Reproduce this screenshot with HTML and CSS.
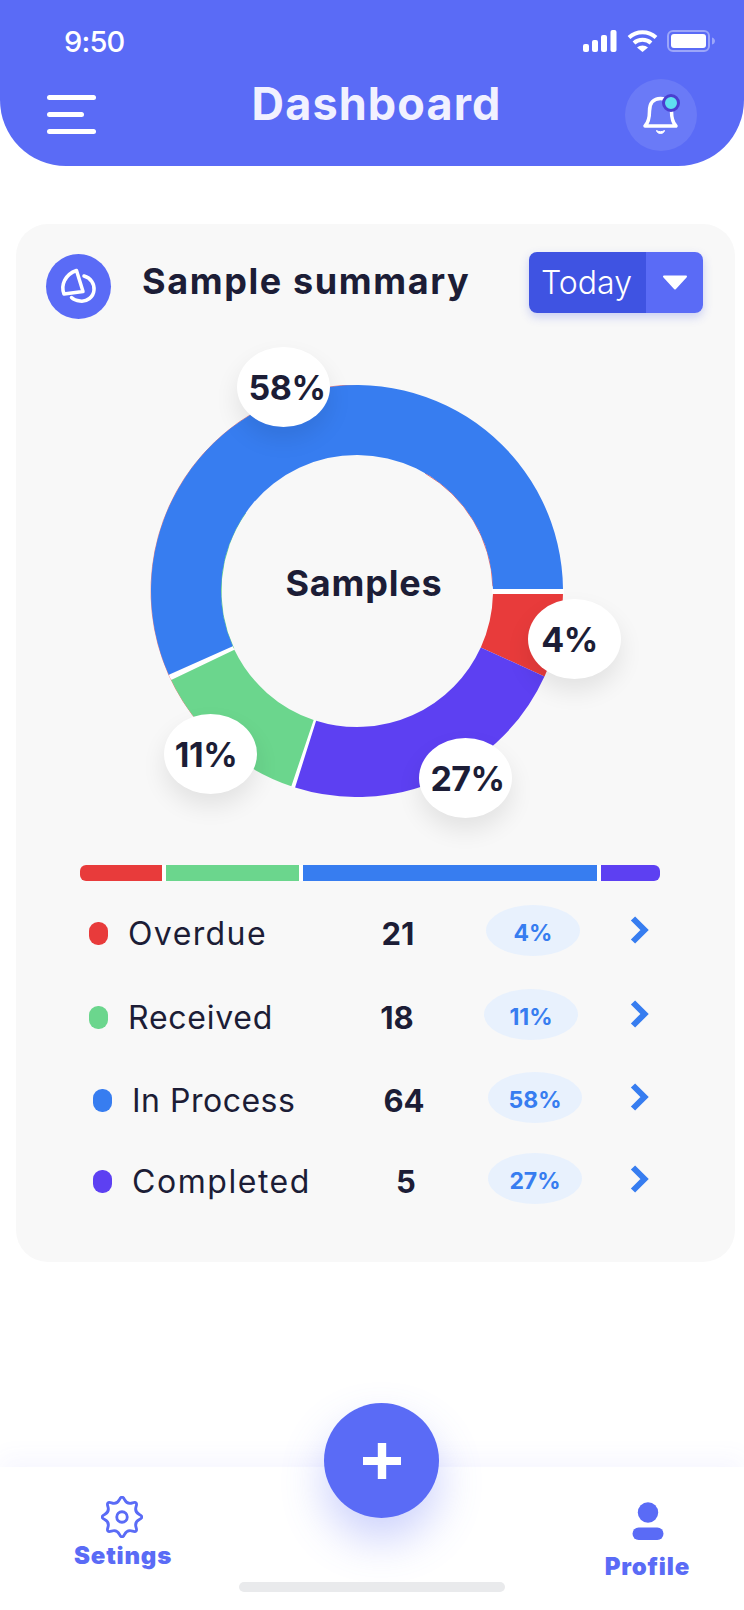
FILE: index.html
```html
<!DOCTYPE html>
<html lang="en">
<head>
  <meta charset="UTF-8">
  <meta name="viewport" content="width=device-width, initial-scale=1.0">
  <title>Dashboard</title>
  <link rel="stylesheet" href="styles.css">
</head>
<body>
  <header class="header">
    <div class="status">
      <span class="status-time">9:50</span>
      <div class="status-icons">
        <svg class="icon-signal" width="34" height="22" viewBox="0 0 34 22">
          <rect x="0" y="14" width="6" height="8" rx="2"/>
          <rect x="9" y="10" width="6" height="12" rx="2"/>
          <rect x="18" y="5" width="6" height="17" rx="2"/>
          <rect x="27.5" y="0" width="6" height="22" rx="2"/>
        </svg>
        <svg class="icon-wifi" width="31" height="22" viewBox="0 0 31 22">
          <path d="M2 7.500C9.500 .5 21.500 .5 29 7.500M7 13C11.500 8.800 19.500 8.800 24 13" fill="none" stroke="#fff" stroke-width="4"/>
          <path d="M10 17.500C13 14.800 18 14.800 21 17.500L15.500 22Z" fill="#fff"/>
        </svg>
        <svg class="icon-battery" width="49" height="22" viewBox="0 0 49 22">
          <rect x="1" y="1" width="41" height="20" rx="5" fill="none" stroke="#fff" stroke-opacity=".4" stroke-width="2"/>
          <rect x="4" y="4" width="35" height="14" rx="3" fill="#fff"/>
          <path d="M45 7.500C47 8 48 9.500 48 11C48 12.500 47 14 45 14.500Z" fill="#fff" fill-opacity=".4"/>
        </svg>
      </div>
    </div>
    <div class="topbar">
      <div class="menu">
        <span class="menu-line"></span>
        <span class="menu-line menu-line-short"></span>
        <span class="menu-line"></span>
      </div>
      <h1 class="title">Dashboard</h1>
      <div class="bell">
        <svg width="42" height="46" viewBox="0 0 42 46">
          <path d="M5 34C9 30 9.500 25 9.500 19C9.500 11 13.500 6.500 20.500 6.500C27.500 6.500 31.500 11 31.500 19C31.500 25 32 30 36 34Z" fill="none" stroke="#fff" stroke-width="3.500" stroke-linejoin="round"/>
          <path d="M16.500 38.500C18.500 40 22.500 40 24.500 38.500C24 42.500 17 42.500 16.500 38.500Z" fill="#fff" stroke="#fff" stroke-linejoin="round"/>
          <circle cx="31" cy="11" r="7.500" fill="#5fe0f0" stroke="#4a3fd0" stroke-width="3"/>
        </svg>
      </div>
    </div>
  </header>

  <main class="card">
    <div class="card-head">
      <div class="card-icon">
        <svg width="40" height="40" viewBox="0 0 40 40">
          <path d="M17.500 3.500L24 24.500L5 27C1.500 18 6 7.500 17.500 3.500Z" fill="none" stroke="#fff" stroke-width="3.500" stroke-linejoin="round"/>
          <path d="M25 9C32 11 35.500 17 35 23C34.500 30 28 35 21 34C17.500 33.500 14.500 32.500 12.500 30.500" fill="none" stroke="#fff" stroke-width="3.500" stroke-linecap="round"/>
        </svg>
      </div>
      <h2 class="card-title">Sample summary</h2>
      <div class="range">
        <span class="range-label">Today</span>
        <span class="range-arrow">
          <svg width="26" height="15" viewBox="0 0 26 15"><path d="M2 1.500H24L13 13.500Z" fill="#fff" stroke="#fff" stroke-width="2" stroke-linejoin="round"/></svg>
        </span>
      </div>
    </div>

    <div class="chart">
      <svg class="donut" width="414" height="412" viewBox="0 0 414 412" fill="none">
        <path d="M74.600 363.800A206 206 0 0 1 207 0" stroke="#e83b3b" stroke-opacity=".6"/>
        <path d="M83.700 263.500A136 136 0 0 1 95.600 128" stroke="#6bd68d"/>
        <path d="M275 88.200A136 136 0 0 1 342.900 201.300" stroke="#e83b3b" stroke-opacity=".7"/>
        <path d="M342 206.500H414M83.500 263L20 292.400M165 335.300L143.300 401.900" stroke="#fff" stroke-width="5"/>
        <path d="M342.970 209H412.980A206 206 0 0 1 394.500 291.400L330.800 262.400A136 136 0 0 0 342.970 209Z" fill="#e83b3b"/>
        <path d="M362.600 276.900A171 171 0 0 1 155.600 369.100" stroke="#5d40f2" stroke-width="70"/>
        <path d="M152.500 368.100A171 171 0 0 1 52.800 279.900" stroke="#6bd68d" stroke-width="70"/>
        <path d="M413 204A206 206 0 1 0 18.800 289.800L82.800 261.300A136 136 0 1 1 343 204Z" fill="#377df0"/>
      </svg>
      <span class="chart-center">Samples</span>
      <span class="bubble bubble-process">58%</span>
      <span class="bubble bubble-overdue">4%</span>
      <span class="bubble bubble-received">11%</span>
      <span class="bubble bubble-completed">27%</span>
    </div>

    <div class="bar">
      <span class="bar-seg seg-overdue"></span>
      <span class="bar-seg seg-received"></span>
      <span class="bar-seg seg-process"></span>
      <span class="bar-seg seg-completed"></span>
    </div>

    <div class="rows">
      <div class="row row-overdue">
        <div class="row-name"><span class="dot dot-overdue"></span>Overdue</div>
        <div class="row-num">21</div>
        <div class="pill">4%</div>
        <svg class="chevron" width="19" height="28" viewBox="0 0 19 28"><path d="M3 2.500L14.500 14L3 25.500" fill="none" stroke="#377df0" stroke-width="6"/></svg>
      </div>
      <div class="row row-received">
        <div class="row-name"><span class="dot dot-received"></span>Received</div>
        <div class="row-num">18</div>
        <div class="pill">11%</div>
        <svg class="chevron" width="19" height="28" viewBox="0 0 19 28"><path d="M3 2.500L14.500 14L3 25.500" fill="none" stroke="#377df0" stroke-width="6"/></svg>
      </div>
      <div class="row row-process">
        <div class="row-name"><span class="dot dot-process"></span>In Process</div>
        <div class="row-num">64</div>
        <div class="pill">58%</div>
        <svg class="chevron" width="19" height="28" viewBox="0 0 19 28"><path d="M3 2.500L14.500 14L3 25.500" fill="none" stroke="#377df0" stroke-width="6"/></svg>
      </div>
      <div class="row row-completed">
        <div class="row-name"><span class="dot dot-completed"></span>Completed</div>
        <div class="row-num">5</div>
        <div class="pill">27%</div>
        <svg class="chevron" width="19" height="28" viewBox="0 0 19 28"><path d="M3 2.500L14.500 14L3 25.500" fill="none" stroke="#377df0" stroke-width="6"/></svg>
      </div>
    </div>
  </main>

  <nav class="nav">
    <button class="fab">
      <svg width="38" height="36" viewBox="0 0 38 36"><path d="M14.800 0H23.200V14H38V22H23.200V36H14.800V22H0V14H14.800Z" fill="#fff"/></svg>
    </button>
    <div class="nav-items">
      <div class="nav-item nav-settings">
        <svg class="nav-gear" width="42" height="42" viewBox="-22 -22 44 44" fill="none" stroke="#5a6bf6" stroke-width="3">
          <path d="M18.200 2.680Q12.930 5.360 14.780 10.990Q16.620 16.620 10.990 14.780Q5.360 12.930 2.680 18.200Q0 23.500 -2.680 18.200Q-5.360 12.930 -10.990 14.780Q-16.620 16.620 -14.780 10.990Q-12.930 5.360 -18.200 2.680Q-23.500 0 -18.200 -2.680Q-12.930 -5.360 -14.780 -10.990Q-16.620 -16.620 -10.990 -14.780Q-5.360 -12.930 -2.680 -18.200Q0 -23.500 2.680 -18.200Q5.360 -12.930 10.990 -14.780Q16.620 -16.620 14.780 -10.990Q12.930 -5.360 18.200 -2.680Q23.500 0 18.200 2.680Z"/>
          <circle r="5.500"/>
        </svg>
        <span class="nav-label">Setings</span>
      </div>
      <div class="nav-item nav-profile">
        <svg class="nav-person" width="32" height="38" viewBox="0 0 32 38" fill="#5a6bf6">
          <circle cx="16" cy="10.500" r="10.200"/>
          <rect x="0.500" y="25.500" width="31" height="12.500" rx="6.200"/>
        </svg>
        <span class="nav-label">Profile</span>
      </div>
    </div>
    <div class="home-bar"></div>
  </nav>
</body>
</html>
```

FILE: styles.css
```css
* {
  box-sizing: border-box;
}
body {
  margin: 0;
  width: 744px;
  height: 1610px;
  display: flex;
  flex-direction: column;
  overflow: hidden;
  background: #fff;
  font-family: Inter, "Liberation Sans", sans-serif;
  color: #1c1d36;
}

/* header */
.header {
  height: 166px;
  padding-top: 26px;
  background: #5a6bf6;
  border-radius: 0 0 66px 66px;
  color: #fff;
}
.status {
  display: flex;
  justify-content: space-between;
  align-items: center;
  height: 30px;
  padding: 0 28px 0 64px;
}
.status-time {
  font-size: 29px;
  font-weight: 500;
  letter-spacing: -0.8px;
}
.status-icons {
  display: flex;
  align-items: center;
  gap: 10px;
}
.icon-battery {
  margin-left: -1px;
}
.icon-signal {
  fill: #fff;
}
.topbar {
  display: flex;
  align-items: center;
  justify-content: space-between;
  margin-top: 23px;
  padding: 0 47px;
}
.menu {
  display: flex;
  flex-direction: column;
  gap: 12px;
  width: 49px;
  margin-top: -2px;
}
.menu-line {
  display: block;
  height: 5px;
  border-radius: 3px;
  background: #fff;
}
.menu-line-short {
  width: 37px;
}
.title {
  margin: -24px 0 0 32px;
  font-size: 45px;
  font-weight: 700;
  letter-spacing: 1.1px;
  color: #f1f1ff;
}
.bell {
  display: flex;
  align-items: center;
  justify-content: center;
  width: 72px;
  height: 72px;
  border-radius: 50%;
  background: rgba(255, 255, 255, 0.1);
}

/* card */
.card {
  width: 719px;
  height: 1038px;
  margin: 58px 0 0 16px;
  padding-top: 28px;
  background: #f8f8f8;
  border-radius: 32px;
}
.card-head {
  display: flex;
  align-items: flex-start;
  height: 67px;
  padding: 0 32px 0 30px;
}
.card-icon {
  display: flex;
  align-items: center;
  justify-content: center;
  width: 65px;
  height: 65px;
  margin-top: 2px;
  border-radius: 50%;
  background: #5a6bf6;
}
.card-title {
  margin: 7px 0 0 31px;
  font-size: 36px;
  font-weight: 700;
  letter-spacing: 1.6px;
}
.range {
  display: flex;
  width: 174px;
  height: 61px;
  margin-left: auto;
  border-radius: 8px;
  overflow: hidden;
  color: #fff;
  box-shadow: 0 4px 10px rgba(63, 83, 226, 0.25);
}
.range-label {
  display: flex;
  align-items: center;
  width: 117px;
  padding-left: 12px;
  background: #3f53e2;
  font-size: 32px;
  font-weight: 300;
}
.range-arrow {
  display: flex;
  align-items: center;
  justify-content: center;
  flex: 1;
  background: #5a6bf6;
}

/* donut */
.chart {
  position: relative;
  width: 414px;
  height: 412px;
  margin: 66px 0 0 134px;
}
.donut {
  display: block;
}
.chart-center {
  position: absolute;
  top: 176px;
  left: 0;
  width: 100%;
  padding-left: 14px;
  font-size: 36px;
  font-weight: 700;
  letter-spacing: 0.8px;
  text-align: center;
}
.bubble {
  position: absolute;
  display: flex;
  align-items: center;
  justify-content: center;
  width: 93px;
  height: 80px;
  border-radius: 50%;
  background: #fff;
  box-shadow: 0 12px 24px rgba(0, 0, 0, 0.09);
  font-size: 34px;
  font-weight: 700;
  letter-spacing: -0.5px;
}
.bubble-process {
  top: -38px;
  left: 87px;
  padding-left: 7px;
}
.bubble-overdue {
  top: 214px;
  left: 378px;
  padding-right: 10px;
}
.bubble-received {
  top: 329px;
  left: 14px;
  padding-right: 9px;
}
.bubble-completed {
  top: 353px;
  left: 269px;
  padding-left: 4px;
}

/* stacked bar */
.bar {
  display: flex;
  justify-content: space-between;
  width: 580px;
  height: 16px;
  margin: 68px 0 0 64px;
  background: #fff;
  border-radius: 6px;
}
.bar-seg {
  display: block;
}
.seg-overdue {
  width: 82px;
  background: #e83b3b;
  border-radius: 6px 0 0 6px;
}
.seg-received {
  width: 133px;
  background: #6bd68d;
}
.seg-process {
  width: 294px;
  background: #377df0;
}
.seg-completed {
  width: 59px;
  background: #5d40f2;
  border-radius: 0 6px 6px 0;
}

/* rows */
.rows {
  margin-top: 24px;
}
.row {
  display: grid;
  grid-template-columns: 333px 100px 181px 19px;
  align-items: center;
  height: 51px;
}
.row-overdue {
  --dot-x: 73px;
  --num-x: -1px;
  --pill-x: 37px;
  --name-ls: 1.4px;
}
.row-received {
  --dot-x: 73px;
  --num-x: -2px;
  --pill-x: 35px;
  --name-ls: 0.75px;
  margin-top: 33px;
}
.row-process {
  --dot-x: 77px;
  --num-x: 5px;
  --pill-x: 39px;
  --name-ls: 0.5px;
  margin-top: 32px;
}
.row-completed {
  --dot-x: 77px;
  --num-x: 7px;
  --pill-x: 39px;
  --name-ls: 1.55px;
  margin-top: 30px;
}
.row-name {
  display: flex;
  align-items: center;
  padding: 5px 0 0 var(--dot-x);
  font-size: 32px;
  letter-spacing: var(--name-ls);
}
.dot {
  flex: none;
  width: 19px;
  height: 23px;
  margin-right: 20px;
  border-radius: 9px;
}
.dot-overdue {
  background: #e83b3b;
}
.dot-received {
  background: #6bd68d;
}
.dot-process {
  background: #377df0;
}
.dot-completed {
  background: #5d40f2;
}
.row-num {
  width: 100px;
  margin-left: var(--num-x);
  padding-top: 5px;
  font-size: 31px;
  font-weight: 700;
  text-align: center;
}
.pill {
  display: flex;
  align-items: center;
  justify-content: center;
  width: 94px;
  height: 51px;
  margin-left: var(--pill-x);
  padding-top: 4px;
  border-radius: 50%;
  background: #e8f1fd;
  color: #377df0;
  font-size: 23px;
  font-weight: 700;
}
.chevron {
  display: block;
  margin-top: -2px;
}
.row-completed .chevron {
  margin-top: 0;
}

/* bottom nav */
.nav {
  position: relative;
  height: 143px;
  margin-top: auto;
  background: #fff;
  box-shadow: 0 -10px 22px rgba(90, 107, 246, 0.05);
}
.fab {
  position: absolute;
  top: -64px;
  left: 324px;
  display: flex;
  align-items: center;
  justify-content: center;
  width: 115px;
  height: 115px;
  padding: 0;
  border: 0;
  border-radius: 50%;
  background: #5a6bf6;
  box-shadow: 0 22px 44px rgba(90, 107, 246, 0.3);
}
.nav-items {
  display: flex;
  justify-content: space-between;
  height: 115px;
  padding: 0 54px 0 74px;
}
.nav-item {
  display: flex;
  flex-direction: column;
  align-items: center;
}
.nav-settings {
  padding-top: 29px;
}
.nav-profile {
  padding-top: 35px;
}
.nav-gear {
  margin-left: -3px;
}
.nav-person {
  margin-left: 2px;
}
.nav-label {
  margin-top: 3px;
  color: #5a6bf6;
  font-size: 24px;
  font-weight: 900;
  letter-spacing: 0.8px;
}
.nav-profile .nav-label {
  margin-top: 12px;
}
.home-bar {
  width: 266px;
  height: 10px;
  margin: 0 auto;
  border-radius: 5px;
  background: #e9eaec;
}
```
